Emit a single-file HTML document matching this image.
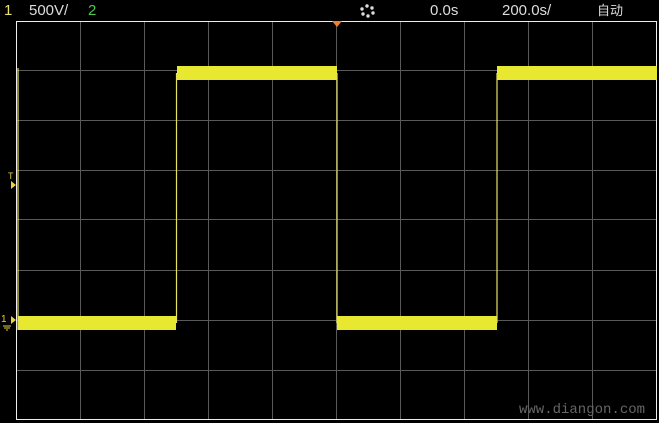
<!DOCTYPE html><html><head><style>body{margin:0;background:#000;width:659px;height:423px;overflow:hidden}svg{display:block}</style></head><body>
<svg width="659" height="423" xmlns="http://www.w3.org/2000/svg">
<rect width="659" height="423" fill="#000"/>
<g font-family="Liberation Sans Narrow, Liberation Sans, Noto Sans CJK SC, sans-serif" font-size="15">
<text x="4" y="15" fill="#e8e070">1</text>
<text x="29" y="15" fill="#ddd">500V/</text>
<text x="88" y="15" fill="#4ec94e">2</text>
<text x="430" y="15" fill="#ddd">0.0s</text>
<text x="502" y="15" fill="#ddd">200.0s/</text>
<text x="597" y="15" fill="#ddd" font-size="13">自动</text>
</g>
<g fill="#ddd"><circle cx="367" cy="6" r="1.7"/><circle cx="372" cy="8" r="1.7"/><circle cx="373" cy="13" r="1.7"/><circle cx="368" cy="16" r="1.7"/><circle cx="363" cy="14" r="1.7"/><circle cx="362" cy="9" r="1.7"/></g>
<g stroke="#5a5a5a" stroke-width="1">
<path d="M80.5 21V420M144.5 21V420M208.5 21V420M272.5 21V420M336.5 21V420M400.5 21V420M464.5 21V420M528.5 21V420M592.5 21V420"/>
<path d="M16 70.5H657M16 120.5H657M16 170.5H657M16 219.5H657M16 270.5H657M16 320.5H657M16 370.5H657"/>
</g>
<rect x="16.5" y="21.5" width="640" height="398" fill="none" stroke="#eee" stroke-width="1"/>
<path d="M332 21h10l-5 6z" fill="#f08030"/>
<g fill="#e8e830"><rect x="18" y="316" width="158" height="14"/><rect x="177" y="66" width="160" height="14"/><rect x="337" y="316" width="160" height="14"/><rect x="497" y="66" width="160" height="14"/></g>
<g stroke="#e8e060" stroke-width="1.2"><path d="M18 68V330M176.5 73V323M337 73V323M497 73V323"/></g>
<path d="M11 181l5 4-5 4z" fill="#e8d040"/>
<text x="8" y="179" fill="#e8d040" font-family="Liberation Sans" font-size="9">T</text>
<path d="M11 316l5 4-5 4z" fill="#e8d040"/>
<text x="1" y="322" fill="#e8d040" font-family="Liberation Sans" font-size="10">1</text>
<path d="M3 326h8M4 328h6M6 330h2" stroke="#e8d040"/>
<text x="519" y="413" fill="#666" font-family="Liberation Mono, monospace" font-size="14">www.diangon.com</text>
</svg></body></html>
